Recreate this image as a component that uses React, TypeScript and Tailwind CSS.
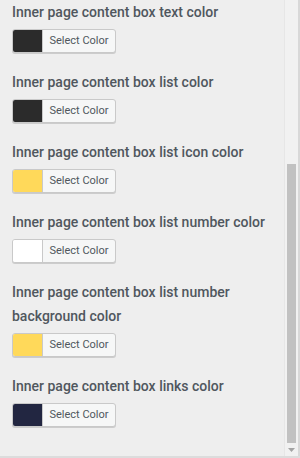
import React from "react";

const fields = [
  { label: "Inner page content box text color", color: "#2b2b2b" },
  { label: "Inner page content box list color", color: "#2b2b2b" },
  { label: "Inner page content box list icon color", color: "#ffd95a" },
  { label: "Inner page content box list number color", color: "#ffffff" },
  { label: "Inner page content box list number background color", color: "#ffd95a" },
  { label: "Inner page content box links color", color: "#222641" },
];

const ColorButton: React.FC<{ color: string }> = ({ color }) => (
  <button className="flex h-6 w-[104px] items-stretch overflow-hidden rounded-[3px] border border-[#c9c9c9] bg-[#f6f7f7] p-0 shadow-[0_1px_0_#ccc]">
    <span className="w-[30px] border-r border-[#c9c9c9]" style={{ backgroundColor: color }} />
    <span className="flex flex-1 items-center justify-center text-[11px] text-[#50575e]">
      Select Color
    </span>
  </button>
);

const App: React.FC = () => {
  return (
    <div
      className="flex h-[458px] w-[300px] border-b-2 border-[#dcdcdc] bg-[#eeeeee]"
      style={{ fontFamily: "Roboto, 'Liberation Sans', sans-serif" }}
    >
      <div className="flex flex-1 flex-col gap-[17px] pl-3 pr-2">
        {fields.map((f) => (
          <div key={f.label} className="flex flex-col gap-[5px]">
            <label className="text-[14px] font-medium leading-6 text-[#50575e]">
              {f.label}
            </label>
            <ColorButton color={f.color} />
          </div>
        ))}
      </div>

      {/* scrollbar */}
      <div className="flex w-[16px] flex-col border-l border-[#e6e6e6] border-r-2 border-r-[#d8d8d8] bg-[#f1f1f1] px-[2px]">
        <div className="h-[164px]" />
        <div className="h-[279px] bg-[#c1c1c1]" />
        <div className="flex flex-1 items-center justify-center">
          <svg width="7" height="4" viewBox="0 0 7 4">
            <path d="M0 0h7L3.5 4z" fill="#a3a3a3" />
          </svg>
        </div>
      </div>
    </div>
  );
};

export default App;
